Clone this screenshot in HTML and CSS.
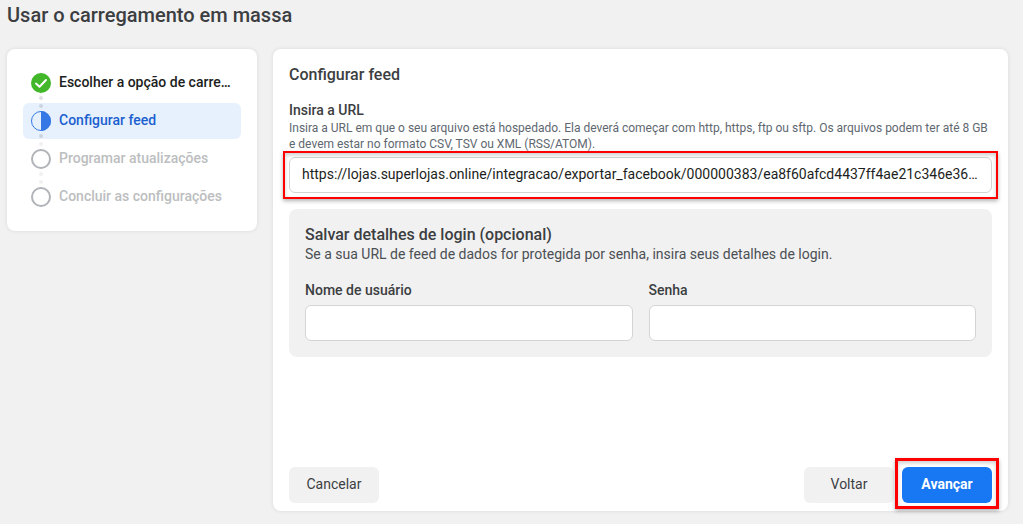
FILE: index.html
```
<!DOCTYPE html>
<html lang="pt-BR">
<head>
  <meta charset="UTF-8" />
  <meta name="viewport" content="width=device-width, initial-scale=1" />
  <title>Usar o carregamento em massa</title>
  <link rel="stylesheet" href="styles.css">
</head>
<body>
  <h1>Usar o carregamento em massa</h1>
  <div class="layout">
    <nav class="card steps">
      <ol>
        <li class="step done">
          <svg class="icon" viewBox="0 0 20 20">
            <circle cx="10" cy="10" r="10" fill="#42b72a" />
            <path d="M5 10.6 L8.5 13.8 L15 7" fill="none" stroke="#fff" stroke-width="2" stroke-linecap="round" stroke-linejoin="round" />
          </svg>
          <span>Escolher a opção de carregamento</span>
        </li>
        <li class="step current">
          <svg class="icon" viewBox="0 0 20 20">
            <circle cx="10" cy="10" r="9.5" fill="none" stroke="#3578e5" />
            <path d="M10 0 A10 10 0 0 1 10 20 Z" fill="#3578e5" />
          </svg>
          <span>Configurar feed</span>
        </li>
        <li class="step">
          <svg class="icon" viewBox="0 0 20 20">
            <circle cx="10" cy="10" r="9" fill="#fff" stroke="#b0b3b8" stroke-width="2" />
          </svg>
          <span>Programar atualizações</span>
        </li>
        <li class="step">
          <svg class="icon" viewBox="0 0 20 20">
            <circle cx="10" cy="10" r="9" fill="#fff" stroke="#b0b3b8" stroke-width="2" />
          </svg>
          <span>Concluir as configurações</span>
        </li>
      </ol>
    </nav>

    <form class="card main">
      <h2>Configurar feed</h2>
      <label for="url">Insira a URL</label>
      <p class="help" id="url-help">Insira a URL em que o seu arquivo está hospedado. Ela deverá começar com http, https, ftp ou sftp. Os arquivos podem ter até 8 GB e devem estar no formato CSV, TSV ou XML (RSS/ATOM).</p>
      <div class="highlight highlight-field">
        <input type="text" id="url" aria-describedby="url-help" value="https://lojas.superlojas.online/integracao/exportar_facebook/000000383/ea8f60afcd4437ff4ae21c346e36...">
      </div>

      <section class="login">
        <h2>Salvar detalhes de login (opcional)</h2>
        <p>Se a sua URL de feed de dados for protegida por senha, insira seus detalhes de login.</p>
        <div class="fields">
          <div class="field">
            <label for="user">Nome de usuário</label>
            <input type="text" id="user">
          </div>
          <div class="field">
            <label for="password">Senha</label>
            <input type="password" id="password">
          </div>
        </div>
      </section>

      <div class="actions">
        <button type="button" class="cancel">Cancelar</button>
        <button type="button">Voltar</button>
        <div class="highlight highlight-button">
          <button type="button" class="primary">Avançar</button>
        </div>
      </div>
    </form>
  </div>
</body>
</html>
```
FILE: styles.css
```
* {
  box-sizing: border-box;
}
body {
  margin: 0;
  min-height: 100vh;
  padding: 3px 15px 13px 7px;
  display: flex;
  flex-direction: column;
  background: #f1f1f1;
  color: #3c3e41;
  font-family: Roboto, "Liberation Sans", sans-serif;
  font-size: 14px;
  line-height: 20px;
}
h1, h2, p, ol {
  margin: 0;
  padding: 0;
}
h1 {
  font-size: 20px;
  font-weight: 500;
  line-height: 24px;
  margin-bottom: 22px;
}
h2 {
  font-size: 16px;
  font-weight: 500;
  line-height: 20px;
}
label {
  display: block;
  font-weight: 500;
}
.layout {
  flex: 1;
  display: flex;
  align-items: flex-start;
  gap: 16px;
}
.card {
  background: #fff;
  border-radius: 8px;
  box-shadow: 0 0 4px rgba(0, 0, 0, 0.1);
}

/* steps */
.steps {
  flex: 0 0 250px;
  min-width: 0;
  padding: 16px;
}
.steps ol {
  display: flex;
  flex-direction: column;
  gap: 2px;
  list-style: none;
}
.step {
  position: relative;
  display: flex;
  align-items: center;
  gap: 8px;
  height: 36px;
  padding: 0 8px;
  border-radius: 6px;
  color: #bcbec0;
  font-weight: 500;
}
.step span {
  overflow: hidden;
  text-overflow: ellipsis;
  white-space: nowrap;
  padding-bottom: 2px;
}
.icon {
  flex: none;
  width: 20px;
  height: 20px;
}
.done {
  color: #1c1e21;
}
.current {
  background: #e7f1fe;
  color: #1b5fce;
}
/* dots joining one step to the next */
.step:not(:last-child)::after,
.step:not(:first-child)::before {
  content: "";
  position: absolute;
  left: 16px;
  width: 4px;
  height: 4px;
  border-radius: 50%;
  background: #000;
  opacity: 0.06;
}
.step::after {
  bottom: 1px;
}
.step::before {
  top: 1px;
}
.step.done::after,
.step.current::before,
.step.current::after {
  opacity: 0.12;
}

/* form */
.main {
  flex: 1;
  align-self: stretch;
  min-width: 0;
  display: flex;
  flex-direction: column;
  padding: 16px 16px 8px;
}
.main > h2 {
  margin-bottom: 15px;
}
.help {
  font-size: 12px;
  line-height: 16px;
  color: #606770;
  margin-bottom: 5px;
}
input {
  display: block;
  width: 100%;
  height: 36px;
  padding: 0 12px 2px;
  border: 1px solid #d4d4d4;
  border-radius: 6px;
  background: #fff;
  color: #1c1e21;
  font: inherit;
  text-overflow: ellipsis;
}
.login {
  margin-top: 16px;
  padding: 16px;
  border-radius: 8px;
  background: #f1f1f1;
}
.login p {
  line-height: 18px;
  color: #4b4f54;
}
.fields {
  display: grid;
  grid-template-columns: 1fr 1fr;
  gap: 16px;
  margin-top: 17px;
}
.field label {
  margin-bottom: 5px;
}
.actions {
  display: flex;
  gap: 8px;
  margin-top: auto;
}
button {
  min-width: 90px;
  height: 36px;
  padding: 0 16px 2px;
  border: none;
  border-radius: 6px;
  background: #f1f1f1;
  color: #3c3e41;
  font: inherit;
  cursor: pointer;
}
.cancel {
  margin-right: auto;
}
.primary {
  background: #1877f2;
  color: #fff;
  font-weight: 700;
}

/* red frames around the parts to look at */
.highlight {
  position: relative;
}
.highlight::after {
  content: "";
  position: absolute;
  border: 2px solid #f00;
  box-shadow: 0 2px 4px rgba(0, 0, 0, 0.3), inset 0 2px 4px rgba(0, 0, 0, 0.2);
  pointer-events: none;
}
.highlight-field::after {
  inset: -6px;
}
.highlight-button::after {
  inset: -9px -7px -6px;
  border-width: 3px;
}
```
